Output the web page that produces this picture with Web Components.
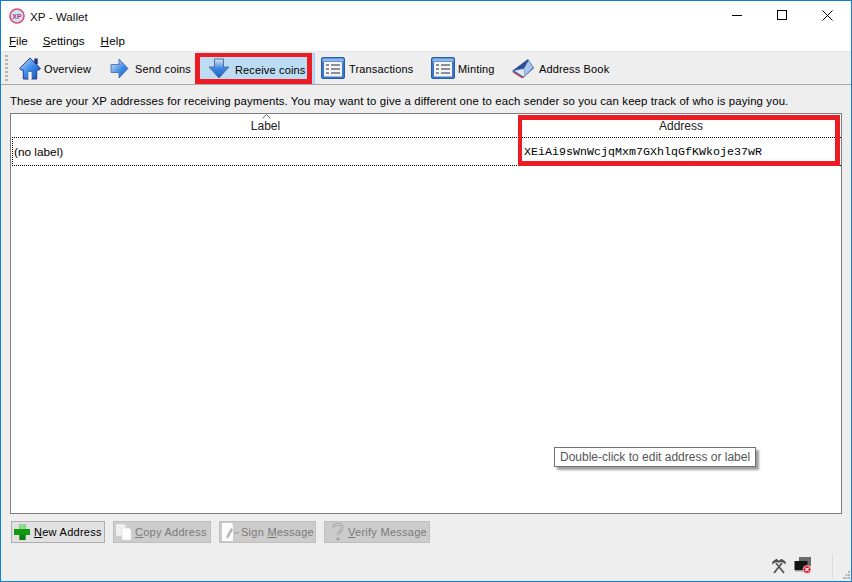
<!DOCTYPE html>
<html><head><meta charset="utf-8">
<style>
html,body{margin:0;height:100%;background:#eee}
body{font:12px "Liberation Sans",sans-serif;color:#000;overflow:hidden}
</style></head>
<body>
<xp-window>
  <xp-titlebar slot="top" caption="XP - Wallet"></xp-titlebar>
  <xp-menubar slot="top"></xp-menubar>
  <xp-toolbar slot="top"></xp-toolbar>
  <xp-intro>These are your XP addresses for receiving payments. You may want to give a different one to each sender so you can keep track of who is paying you.</xp-intro>
  <xp-table></xp-table>
  <xp-actions></xp-actions>
  <xp-status></xp-status>
  <xp-tooltip>Double-click to edit address or label</xp-tooltip>
</xp-window>
<script>
const FONT='"Liberation Sans",sans-serif';
const listIcon=`<svg width="24" height="22" viewBox="0 0 24 22"><rect x=".5" y=".5" width="23" height="21" rx="1.5" fill="#3c78c8" stroke="#2a5aa8"/><rect x="1.5" y="1.5" width="21" height="3" fill="#8fb8ea"/><rect x="3" y="5" width="18" height="14.5" fill="#f4f4f4"/><g fill="#8a8f98"><rect x="5" y="7" width="3" height="2"/><rect x="5" y="11" width="3" height="2"/><rect x="5" y="15" width="3" height="2"/><rect x="10" y="7" width="9" height="2"/><rect x="10" y="11" width="9" height="2"/><rect x="10" y="15" width="9" height="2"/></g></svg>`;
const icons={
overview:`<svg width="24" height="23" viewBox="0 0 24 24"><defs><linearGradient id="h" x1="0" y1="0" x2="1" y2="1"><stop offset="0" stop-color="#cfe2fa"/><stop offset=".5" stop-color="#3f8ce8"/><stop offset="1" stop-color="#1c4fb0"/></linearGradient></defs><rect x="16.500" y="1.500" width="3.500" height="6" fill="#1d2f80"/><path d="M12 1 1 12l1.500 1.500H5V23h5.500v-7h3v7H19v-9.500h2.500L23 12Z" fill="url(#h)" stroke="#1d3a90" stroke-linejoin="round"/><rect x="10.200" y="15.600" width="3.600" height="7.400" fill="#eef4fc"/></svg>`,
send:`<svg width="19" height="21" viewBox="0 0 19 21"><defs><linearGradient id="s" x1="0" y1="0" x2="1" y2="1"><stop offset="0" stop-color="#dfeafa"/><stop offset=".6" stop-color="#3a86e4"/><stop offset="1" stop-color="#1f5cb8"/></linearGradient></defs><path d="M1 6.500h8V1l9 9.500-9 9.500v-5.500H1Z" fill="url(#s)" stroke="#5a78b0" stroke-linejoin="round"/></svg>`,
receive:`<svg width="22" height="21" viewBox="0 0 22 21"><defs><linearGradient id="r" x1="0" y1="0" x2="0" y2="1"><stop offset="0" stop-color="#dbe8f8"/><stop offset=".5" stop-color="#3b88e4"/><stop offset="1" stop-color="#1d5cc0"/></linearGradient></defs><path d="M6.500 1h9v8h5.500L11 20 1 9h5.500Z" fill="url(#r)" stroke="#586f9c" stroke-linejoin="round"/></svg>`,
list:listIcon,
book:`<svg width="24" height="22" viewBox="0 0 24 22"><path d="M1 14 17 2l6 9-10 9-1 1Z" fill="#2c4f96"/><path d="M2.500 13.500 13 11.500l1 7-1.500 1.500Z" fill="#dfe9f6" stroke="#3d5fa6" stroke-width=".6"/><path d="M13 11.500 17.500 3.500l4.500 7-8 8Z" fill="#a8c6ee"/><path d="M2 15l9 5.500 2-.5" fill="none" stroke="#c9465c" stroke-width="1.200"/></svg>`,
plus:`<svg width="16" height="16" viewBox="0 0 16 16"><rect x="5.500" y="0" width="6" height="16" fill="#2fae32"/><rect x="5.500" y="0" width="6" height="5" fill="#90d890"/><rect x="0" y="5" width="16" height="6" fill="#0f9a12"/><rect x="5.500" y="11" width="6" height="5" fill="#0d7d10"/></svg>`,
copy:`<svg width="16" height="16" viewBox="0 0 16 16"><path d="M0 0h8l2 2v10H0Z" fill="#f1f1f1" stroke="#d8d8d8" stroke-width=".6"/><path d="M6 4h7l2 2v10H6Z" fill="#fff" stroke="#d8d8d8" stroke-width=".6"/></svg>`,
sign:`<svg width="17" height="18" viewBox="0 0 17 18"><path d="M0 0h9l2 2v16H0Z" fill="#fbfbfb"/><path d="M4 14 9 5l2 1.500-5 9Z" fill="#b5b5b5"/><rect x="12" y="9" width="5" height="2" fill="#b2b2b2"/></svg>`,
verify:`<svg width="14" height="20" viewBox="0 0 14 20"><path d="M2.500 5.500C2.500 2 11.500 .5 11.500 5.500 11.500 9 7 9.500 7 13" fill="none" stroke="#9c9c9c" stroke-width="2.400"/><path d="M2.500 5.500C2.500 2 11.500 .5 11.500 5.500 11.500 9 7 9.500 7 13" fill="none" stroke="#dcdcdc" stroke-width="1"/><circle cx="7" cy="17" r="1.800" fill="#a8a8a8"/></svg>`
};
function def(name,css,html){
  customElements.define(name,class extends HTMLElement{
    connectedCallback(){
      if(this.shadowRoot)return;
      const s=this.attachShadow({mode:'open'});
      s.innerHTML=`<style>${css}</style>`+(typeof html==='function'?html(this):html);
    }
  });
}
def('xp-window',`:host{display:block;position:relative;box-sizing:border-box;width:852px;height:582px;border:1px solid #0f80d8;background:#eee;overflow:hidden}
  .top{display:block;background:#fff}`,`<div class="top"><slot name="top"></slot></div><slot></slot>`);
def('xp-titlebar',`:host{display:flex;align-items:center;height:29px;background:#fff;font:11.7px ${FONT}}
  svg{display:block}
  .logo{margin:0 5px 0 8px}
  .cap{flex:1;color:#111;margin-top:1px}
  .ctl{display:flex}
  .b{width:45px;height:29px;display:flex;align-items:center;justify-content:center}
`,h=>`<svg class="logo" width="16" height="16" viewBox="0 0 16 16"><circle cx="8" cy="8" r="7" fill="#cfe3f0" stroke="#e0487e" stroke-width="1.600"/><text x="8" y="10.500" text-anchor="middle" font-family="Liberation Sans" font-size="7" font-weight="700" fill="#b03a7a">XP</text></svg><span class="cap">${h.getAttribute('caption')}</span>
  <div class="ctl"><div class="b"><svg width="11" height="11"><path d="M0 5.500h10" stroke="#000"/></svg></div><div class="b"><svg width="11" height="11"><rect x=".5" y=".5" width="9" height="9" fill="none" stroke="#000"/></svg></div><div class="b" style="margin-right:1px"><svg width="11" height="11"><path d="M.5.500l10 10M10.500.500l-10 10" stroke="#000" stroke-width="1"/></svg></div></div>`);
def('xp-menubar',`:host{display:flex;height:22px;align-items:center;gap:15px;padding-left:8px;background:#fff;font:11.6px ${FONT};border-bottom:1px solid #e6e6e6;box-sizing:border-box}
  u{text-underline-offset:1px}`,`<span><u>F</u>ile</span><span><u>S</u>ettings</span><span style="margin-left:1px;letter-spacing:.2px"><u>H</u>elp</span>`);
def('xp-tool',`:host{display:flex;align-items:center;height:31px;box-sizing:border-box;font:11px ${FONT};letter-spacing:.15px;position:relative}
  :host([active]){background:#bcdcf4;border:1px solid #a6d0f0}
  .l{padding-top:2px}
  :host([active]) .l{padding-top:3px}
  .ic{display:flex;justify-content:center}`,
  h=>`<span class="ic">${icons[h.getAttribute('icon')]}</span><span class="l" style="margin-left:${h.getAttribute('gap')||5}px;white-space:nowrap"><slot></slot></span>`);
def('xp-toolbar',`:host{display:flex;align-items:center;height:33px;box-sizing:border-box;background:#eee;border-bottom:1px solid #a8a8a8;position:relative;padding-left:4px}
  .grip{width:3px;height:26px;margin-right:10px;background:repeating-linear-gradient(#b4b4b4 0 2px,transparent 2px 4px)}
  xp-tool{flex:none}
  .hl{position:absolute;left:194px;top:1px;width:117px;height:31px;box-sizing:border-box;border:5px solid #ed1c24;border-top-width:4px}`,
  `<div class="grip"></div>
  <xp-tool icon="overview" gap="2" style="width:73px">Overview</xp-tool>
  <xp-tool icon="send" gap="6" style="width:81px;margin-left:19px">Send coins</xp-tool>
  <xp-tool active icon="receive" gap="5" style="width:117px;margin-left:7px;padding-left:9px;">Receive coins</xp-tool>
  <xp-tool icon="list" gap="4" style="margin-left:6px;width:93px">Transactions</xp-tool>
  <xp-tool icon="list" gap="3" style="margin-left:17px;width:63px">Minting</xp-tool>
  <xp-tool icon="book" gap="4" style="margin-left:17px">Address Book</xp-tool>
  <div class="hl"></div>`);
def('xp-intro',`:host{display:block;height:28px;box-sizing:border-box;padding:10px 0 0 9px;font:11.4px ${FONT};letter-spacing:.125px;white-space:nowrap}`,`<slot></slot>`);
def('xp-table',`:host{display:block;position:relative;box-sizing:border-box;margin-left:9px;width:832px;height:401px;background:#fff;border:1px solid #7e7e7e;font:12px ${FONT}}
  .row{display:grid;grid-template-columns:507px 1fr}
  .head{height:23px;position:relative;margin-left:1px}
  .head div{display:flex;justify-content:center;align-items:center;padding-top:1px;color:#222;font-size:12px}
  .head .a{padding-left:2px}
  .arrow{position:absolute;left:250px;top:0}
  .data{margin-left:1px;height:29px;box-sizing:border-box;border:1px dotted #000;border-right:0}
  .data div{display:flex;align-items:center;padding-left:1px;font-size:11.8px}
  .data .a{font:11.6px "Liberation Mono",monospace;padding-left:4px;letter-spacing:.04px}
  .hl{position:absolute;left:507px;top:1px;width:322px;height:51px;box-sizing:border-box;border:5px solid #ed1c24;border-left-width:4px}`,
  `<div class="row head"><div>Label</div><div class="a">Address</div><svg class="arrow" width="9" height="5"><path d="M.5 4.500l4-4 4 4" fill="none" stroke="#777"/></svg></div>
   <div class="row data"><div>(no label)</div><div class="a">XEiAi9sWnWcjqMxm7GXhlqGfKWkoje37wR</div></div><div class="hl"></div>`);
def('xp-btn',`:host{display:flex;align-items:center;height:22px;box-sizing:border-box;background:#e1e1e1;border:1px solid #adadad;font:11px ${FONT};padding-left:2px;letter-spacing:.27px;white-space:nowrap}
  :host([disabled]){background:#ccc;border-color:#bfbfbf;color:#7a7a7a}`,
  h=>`${icons[h.getAttribute('icon')]}<span style="margin-left:${h.getAttribute('gap')||3}px"><slot></slot></span>`);
def('xp-actions',`:host{display:flex;gap:8px;margin:7px 0 0 10px;height:22px}`,
 `<xp-btn icon="plus" gap="4" style="width:94px"><u>N</u>ew Address</xp-btn>
  <xp-btn disabled icon="copy" gap="3" style="width:98px"><u>C</u>opy Address</xp-btn>
  <xp-btn disabled icon="sign" gap="2" style="width:97px">Sign <u>M</u>essage</xp-btn>
  <xp-btn disabled icon="verify" gap="3" style="width:106px;padding-left:6px"><u>V</u>erify Message</xp-btn>`);
def('xp-status',`:host{display:flex;align-items:flex-start;justify-content:flex-end;height:26px;margin-top:11px;padding-right:1px;position:relative}
  svg{display:block}
  .sep{width:1px;height:24px;background:#dcdcdc;margin:0 17px 0 20px}
  .grip{position:absolute;right:0;bottom:1px}`,
 `<svg width="16" height="16" viewBox="0 0 16 16" style="margin:4px 7px 0 0"><path d="M3 15 11 5M13 15 5 5" stroke="#555" stroke-width="1.800"/><path d="M1 6.500 1.500 3.500 5.500.800 8 2.800 10.500.800 14.500 3.500 15 6.500 12 4.500 9.500 4 8 5 6.500 4 4 4.500Z" fill="#4e4e4e"/></svg>
  <svg width="18" height="18" viewBox="0 0 18 18" style="margin-top:2px"><rect x="5" y="1" width="12" height="9" fill="#6a6a6a"/><rect x="0.500" y="5" width="13" height="9" fill="#141414"/><rect x="1" y="14" width="12" height="1.500" fill="#9a9a9a"/><circle cx="13" cy="13.500" r="4" fill="#d9263a" stroke="#fff" stroke-width=".6"/><path d="M11.300 11.800l3.400 3.400M14.700 11.800l-3.400 3.400" stroke="#fff" stroke-width="1.100"/></svg>
  <div class="sep"></div>
  <svg class="grip" width="8" height="8"><g fill="#b4b4b4"><rect x="5" y="0" width="2" height="2"/><rect x="2.500" y="3" width="2" height="2"/><rect x="5" y="3" width="2" height="2"/><rect x="0" y="6" width="2" height="2"/><rect x="2.500" y="6" width="2" height="2"/><rect x="5" y="6" width="2" height="2"/></g></svg>`);
def('xp-tooltip',`:host{position:absolute;left:553px;top:446px;width:202px;height:20px;box-sizing:border-box;background:#fff;border:1px solid #707070;box-shadow:3px 3px 2px rgba(0,0,0,.38);font:12px ${FONT};color:#555;padding:2px 0 0 5px;white-space:nowrap}`,`<slot></slot>`);
</script>
</body></html>
